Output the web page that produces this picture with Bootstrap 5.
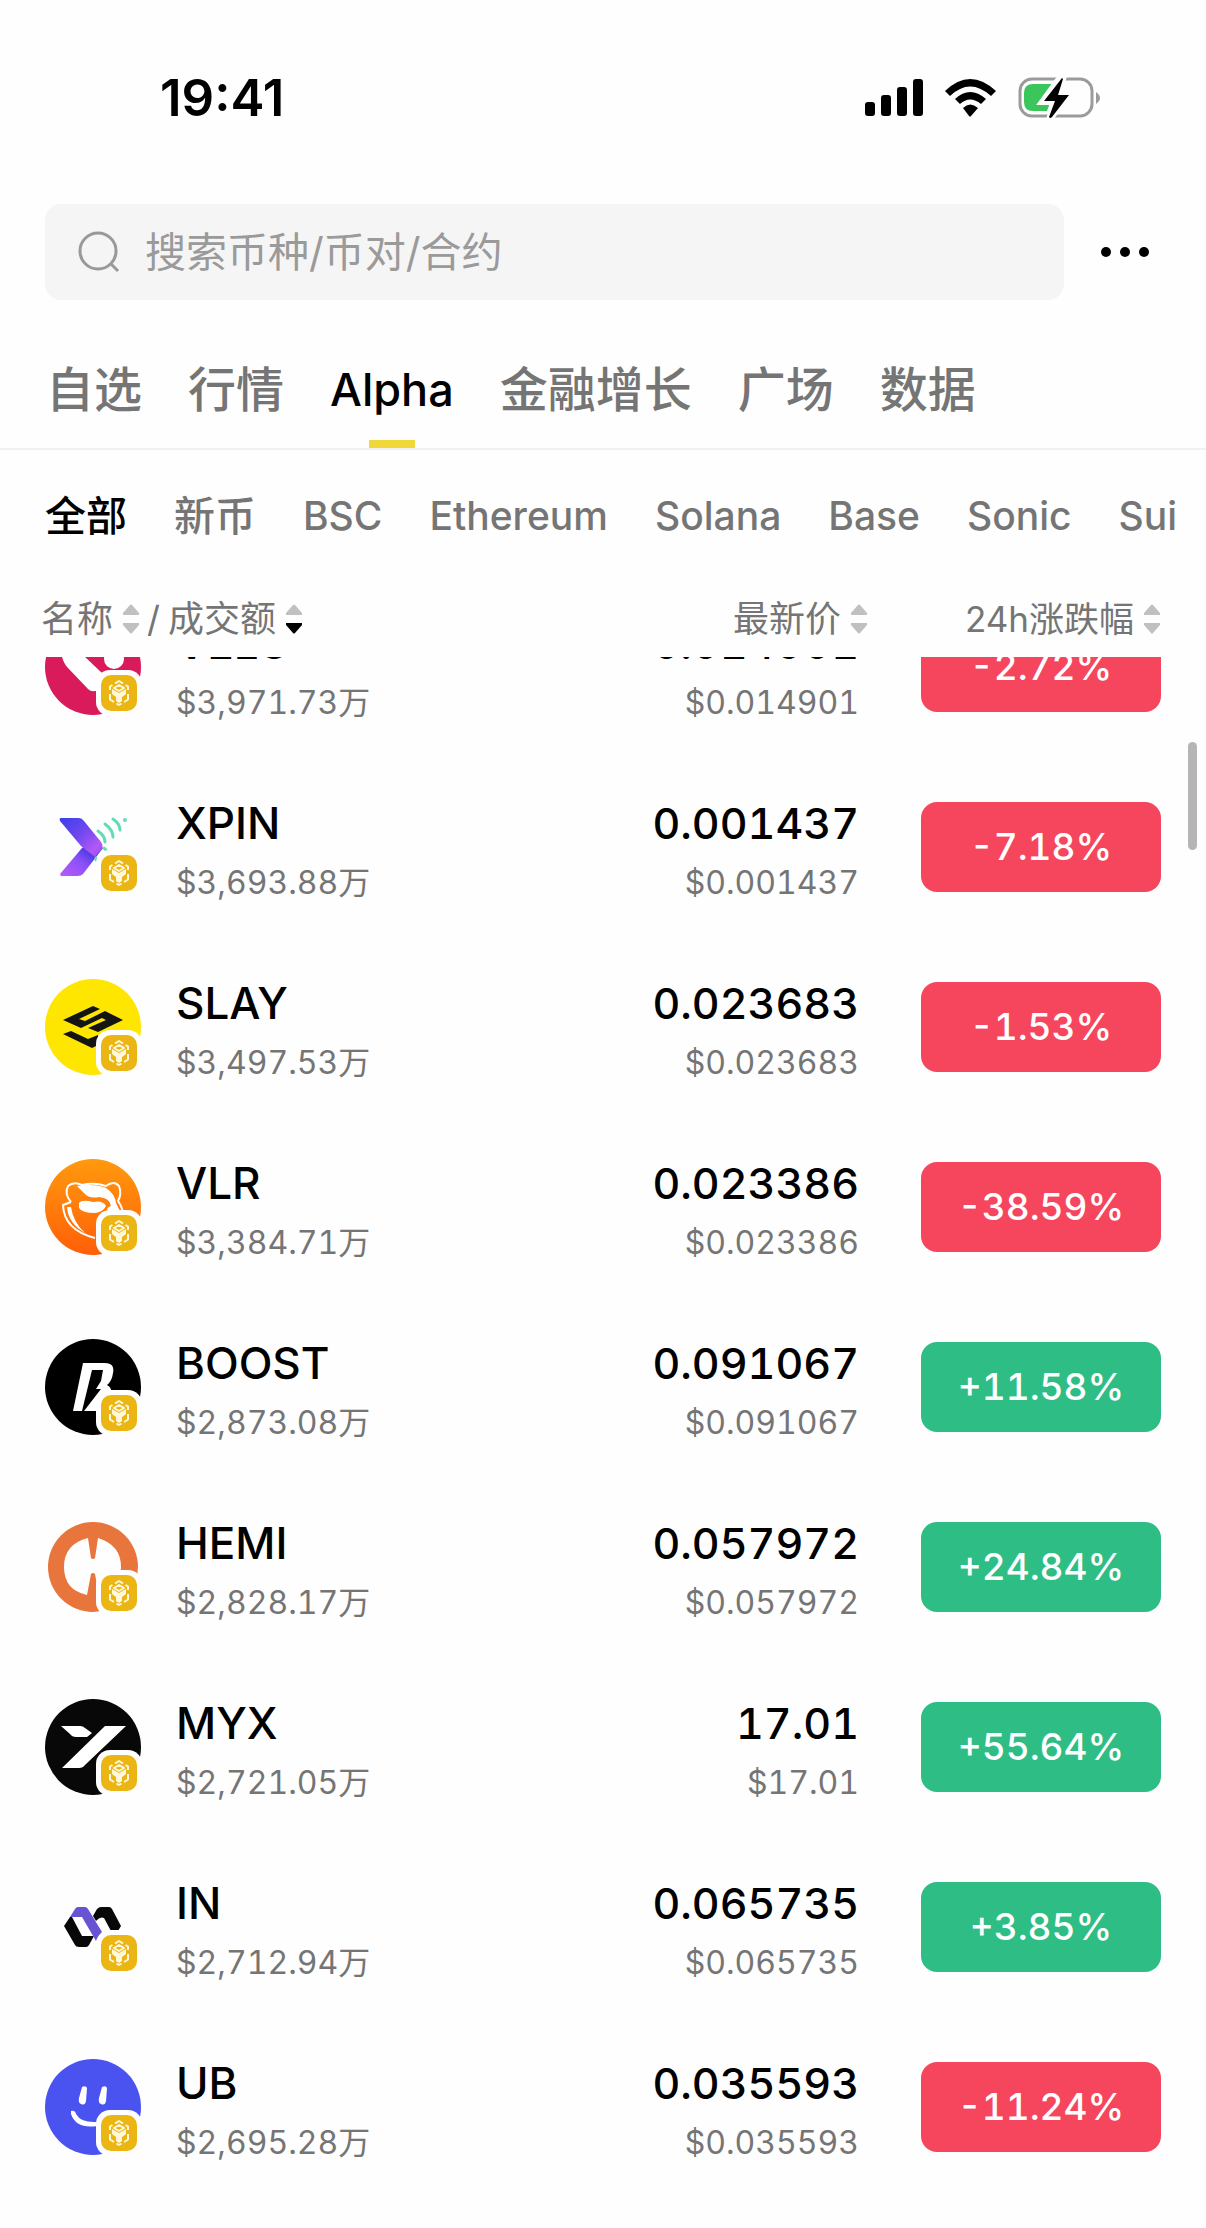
<!DOCTYPE html>
<html lang="zh-CN">
<head>
<meta charset="utf-8">
<meta name="viewport" content="width=device-width, initial-scale=1">
<title>Alpha 行情</title>
<link href="https://cdn.jsdelivr.net/npm/bootstrap@5.3.0/dist/css/bootstrap.min.css" rel="stylesheet">
<style>
  body { font-family: Inter, "Noto Sans CJK SC", sans-serif; color: #000; background: #fefefe; font-variant-numeric: tabular-nums; }
  svg { display: block; flex: none; }
  .screen { min-height: 100vh; overflow: hidden; }
  .status { height: 204px; padding: 68px 104px 0 160px; }
  .clock { font-size: 51px; line-height: 60px; font-weight: 600; font-variant-numeric: normal; }
  .search-area { padding: 0 40px 0 45px; gap: 20px; }
  .search-box { height: 96px; border-radius: 16px; background: #f5f5f5; padding: 0 33px; gap: 25px; }
  .search-box input { font-size: 41px; line-height: 60px; outline: 0; }
  .search-box input::placeholder { color: #9a9a9a; opacity: 1; }
  .tabs { height: 150px; padding: 0 46px; gap: 46px; border-bottom: 2px solid #f0f0f0; }
  .tabs a { font-size: 48px; font-weight: 500; line-height: 60px; padding: 60px 0 28px; color: #757575; position: relative; text-decoration: none; white-space: nowrap; }
  .tabs a.active { color: #000; font-size: 45px; }
  .tabs a.active::after { content: ""; position: absolute; left: 50%; bottom: 0; width: 46px; height: 8px; margin-left: -23px; background: #f0d73a; }
  .chains { padding: 36px 0 34px 45px; gap: 47px; }
  .chains a { font-size: 39px; line-height: 60px; font-weight: 500; color: #757575; text-decoration: none; white-space: nowrap; }
  .chains .zh { font-size: 41px; }
  .chains a.active { color: #000; }
  .sorts { height: 77px; padding: 0 46px 0 41px; color: #757575; font-size: 36px; line-height: 50px; }
  .sorts button { gap: 10px; white-space: nowrap; }
  .sorts .sort-change { width: 293px; font-size: 35px; }
  .viewport { overflow: hidden; }
  .coins { table-layout: fixed; margin-top: -80px; width: 100%; }
  .coins td { height: 180px; padding: 0; vertical-align: middle; }
  .coins .c-name { padding-left: 45px; }
  .coins .c-price { width: 300px; text-align: right; }
  .coins .c-change { width: 347px; padding-right: 45px; }
  .coin { gap: 34px; }
  .coin-text { padding-top: 12px; }
  .main-line { font-size: 44px; line-height: 60px; font-weight: 500; }
  .c-price .main-line { font-size: 43px; }
  .sub-line { font-size: 32px; line-height: 60px; color: #757575; }
  .rate { width: 240px; height: 90px; border-radius: 16px; font-size: 37px; font-weight: 500; color: #fff; }
  .down { background: #f6465d; }
  .up { background: #2ebd85; }
  .thumb { position: absolute; right: 9px; top: 742px; width: 9px; height: 108px; border-radius: 5px; background: #b5b5b5; }
</style>
</head>
<body>

<svg width="0" height="0" class="position-absolute" aria-hidden="true">
  <defs>
    <linearGradient id="gOrange" x1="0" y1="0" x2="0" y2="1"><stop offset="0" stop-color="#ff9a0e"/><stop offset="1" stop-color="#ff5f08"/></linearGradient>
    <linearGradient id="gViolet" x1="0" y1="0" x2="1" y2="1"><stop offset="0" stop-color="#3a3fe8"/><stop offset=".45" stop-color="#7048ee"/><stop offset=".8" stop-color="#b258f6"/><stop offset="1" stop-color="#8a50f0"/></linearGradient>
    <linearGradient id="gViolet2" x1="0" y1="1" x2="1" y2="0"><stop offset="0" stop-color="#b85cf8"/><stop offset=".45" stop-color="#8a50f8"/><stop offset=".75" stop-color="#3f35dc"/></linearGradient>
    <symbol id="bnb" viewBox="0 0 96 96">
      <rect x="51" y="51" width="46" height="46" rx="14" fill="#fefefe"/>
      <rect x="56" y="56" width="36" height="36" rx="10" fill="#ebb513"/>
      <g fill="none" stroke="#fff8dc" stroke-width="2" stroke-linejoin="round">
        <path d="M70 64.500l4-2.500 4 2.500M67.500 66L65 67.500V71M80.500 66l2.500 1.500V71M65 75v5.500l4 2.500M83 75v5.500l-4 2.500M71.500 84.500L74 86l2.500-1.500"/>
        <path d="M69 69l5-3 5 3-5 3z"/>
      </g>
      <path d="M67 70l7 4 7-4v5l-4 3v4l-3 2-3-2v-4l-4-3z" fill="#fff8dc"/>
    </symbol>
    <symbol id="velo" viewBox="0 0 96 96">
      <circle cx="48" cy="48" r="48" fill="#d91b5c"/>
      <path d="M8 26Q22 18 38 36L58 55Q55 60 53 71Q47 74 43 70L23 49Q19 45 17 38z" fill="#fff"/>
      <circle cx="69" cy="40" r="10" fill="#fff"/>
    </symbol>
    <symbol id="xpin" viewBox="0 0 96 96">
      <path d="M15 75L37 49 50 42 58 49 38 75Q36 77 33 77H16z" fill="url(#gViolet2)"/>
      <path d="M16 19H34Q37 19 39 22L56 43Q59 47 56 51L50 58 36 47 15 22Q14 19 16 19z" fill="url(#gViolet)"/>
      <g fill="none" stroke="#62dcb8" stroke-width="3" stroke-linecap="round"><path d="M53 32Q60 37 60 43M60 25Q68 31 68 38M68 20Q75 25 75 31M59 49l2 2M51 59v2"/></g>
      <circle cx="80" cy="21" r="2" fill="#62dcb8"/>
    </symbol>
    <symbol id="slay" viewBox="0 0 96 96">
      <circle cx="48" cy="48" r="48" fill="#fee600"/>
      <path d="M18 41L48 27 55 30 34 40 40 42 60 32 78 41 53 53 43 49 61 41 57 39 36 49zM18 55L26 52 43 60 53 56V66L47 69z" fill="#141414"/>
    </symbol>
    <symbol id="vlr" viewBox="0 0 96 96">
      <circle cx="48" cy="48" r="48" fill="url(#gOrange)"/>
      <path d="M26 43Q19 35 23 27Q29 22 37 26Q49 23 61 27Q69 21 74 27Q77 35 73 42Q79 50 78 60M26 43L18 46Q19 71 50 79" fill="none" stroke="#fff" stroke-width="2"/>
      <path d="M32 27Q50 24 61 29Q70 35 71 44L78 58 69 55Q57 50 66 47Q65 39 54 38Q44 40 39 34z" fill="#fff"/>
      <path d="M34 44Q37 40 48 43Q58 41 61 47Q58 53 50 54Q37 54 34 49z" fill="#fff"/>
      <path d="M22 48Q23 64 40 74Q28 63 26 48z" fill="#fff"/>
    </symbol>
    <symbol id="boost" viewBox="0 0 96 96">
      <circle cx="48" cy="48" r="48" fill="#000"/>
      <path d="M38 24H60Q70 24 68 34Q67 42 62 46Q68 49 66 57Q64 72 52 72H39L56 50H51L56 42 58 31H47L37 72H28z" fill="#fff"/>
    </symbol>
    <symbol id="hemi" viewBox="0 0 96 96">
      <circle cx="48" cy="48" r="45" fill="#e8753c"/>
      <path d="M43 19Q19 25 19 48T42 76L46 55Q48 53 50 55L54 76Q76 70 76 48T53 19L50 39Q48 41 46 39z" fill="#fefefe"/>
    </symbol>
    <symbol id="myx" viewBox="0 0 96 96">
      <circle cx="48" cy="48" r="48" fill="#080808"/>
      <path d="M16 27H35Q38 27 40 29L47 34 42 38H31Q27 38 25 35zM60 27H81L40 66Q38 69 34 69H17z" fill="#fff"/>
    </symbol>
    <symbol id="inn" viewBox="0 0 96 96">
      <path d="M25 38L19 47 30 66Q31 68 34 68H41Q43 68 44 66L49 57H37L27 38z" fill="#080808"/>
      <path d="M25 38L30 30Q31 28 33 28H40Q42 28 43 30L57 53 51 62 37 38z" fill="#6953d2"/>
      <path d="M48 37L52 30Q54 28 56 28H64Q66 28 67 30L76 47 73 52H66L59 39Q55 37 51 42z" fill="#080808"/>
    </symbol>
    <symbol id="ub" viewBox="0 0 96 96">
      <circle cx="48" cy="48" r="48" fill="#4a53ef"/>
      <path d="M37 28Q41 26 42 29L41 42Q40 47 36 45Q33 44 34 39zM57 28Q61 26 62 29L61 42Q60 47 56 45Q53 44 54 39zM26 52Q30 51 31 55Q36 64 52 63V67Q31 70 26 55z" fill="#fff"/>
    </symbol>
    <symbol id="arrows" viewBox="0 0 16 32">
      <path d="M7 2Q8 1 9 2L16 10V12H0V10z" fill="#c0c0c0"/>
      <path d="M0 20H16V22L9 30Q8 31 7 30L0 22z" fill="currentColor"/>
    </symbol>
  </defs>
</svg>

<div class="screen position-relative">
  <header class="status d-flex align-items-start justify-content-between">
    <div class="clock">19:41</div>
    <div class="d-flex">
      <svg width="237" height="60" viewBox="0 0 237 60" role="img" aria-label="信号、Wi-Fi、充电中">
        <g><rect x="0" y="34" width="10" height="14" rx="3"/><rect x="16" y="27" width="10" height="21" rx="3"/><rect x="32" y="19" width="10" height="29" rx="3"/><rect x="48" y="11" width="10" height="37" rx="3"/></g>
        <path d="M80 23Q105 -1 131 23L126 28Q105 9 85 28zM90 31Q105 17 121 31L116 36Q105 27 95 36zM98 40Q105 33 113 40L106 48Q105 49 104 48z"/>
        <rect x="155" y="11" width="72" height="37" rx="12" fill="none" stroke="#9b9b9b" stroke-width="3"/>
        <path d="M168 16H192L182 43H168Q159 43 159 34V25Q159 16 168 16z" fill="#3bc65c"/>
        <path d="M231 24Q239 30 231 36z" fill="#9b9b9b"/>
        <path d="M196 8L177 34H189L184 52 205 26H193L199 8z" stroke="#fefefe" stroke-width="6"/>
        <path d="M197 10L179 33H190L184 49Q185 51 187 49L204 27H193L198 11z"/>
      </svg>
    </div>
  </header>

  <form class="search-area d-flex align-items-center" role="search">
    <label class="search-box d-flex align-items-center flex-grow-1">
      <svg width="42" height="42" viewBox="0 0 42 42" fill="none" stroke="#999" stroke-width="3"><circle cx="20" cy="20" r="18"/><path d="M33 33l7 7"/></svg>
      <input type="search" class="border-0 bg-transparent flex-grow-1 p-0" placeholder="搜索币种/币对/合约" aria-label="搜索币种/币对/合约">
    </label>
    <button type="button" class="btn border-0 p-3" aria-label="更多">
      <svg width="50" height="12" viewBox="0 0 50 12"><circle cx="6" cy="6" r="5"/><circle cx="25" cy="6" r="5"/><circle cx="44" cy="6" r="5"/></svg>
    </button>
  </form>

  <nav class="tabs d-flex" aria-label="市场">
    <a href="#">自选</a>
    <a href="#">行情</a>
    <a href="#" class="active" aria-current="page">Alpha</a>
    <a href="#">金融增长</a>
    <a href="#">广场</a>
    <a href="#">数据</a>
  </nav>

  <nav class="chains d-flex overflow-hidden" aria-label="公链">
    <a href="#" class="zh active" aria-current="true">全部</a>
    <a href="#" class="zh">新币</a>
    <a href="#">BSC</a>
    <a href="#">Ethereum</a>
    <a href="#">Solana</a>
    <a href="#">Base</a>
    <a href="#">Sonic</a>
    <a href="#">Sui</a>
  </nav>

  <div class="sorts d-flex align-items-center">
    <div class="d-flex align-items-center flex-grow-1 gap-2">
      <button type="button" class="d-flex align-items-center border-0 bg-transparent p-0 text-reset">名称<svg width="16" height="32" color="#c0c0c0"><use href="#arrows"/></svg></button>
      <span>/</span>
      <button type="button" class="d-flex align-items-center border-0 bg-transparent p-0 text-reset">成交额<svg width="16" height="32" color="#000"><use href="#arrows"/></svg></button>
    </div>
    <button type="button" class="d-flex align-items-center border-0 bg-transparent p-0 text-reset">最新价<svg width="16" height="32" color="#c0c0c0"><use href="#arrows"/></svg></button>
    <button type="button" class="sort-change d-flex align-items-center justify-content-end border-0 bg-transparent p-0 text-reset">24h涨跌幅<svg width="16" height="32" color="#c0c0c0"><use href="#arrows"/></svg></button>
  </div>

  <main class="viewport">
    <table class="coins" aria-label="Alpha 代币">
      <colgroup><col><col style="width:300px"><col style="width:347px"></colgroup>
      <tbody>
        <tr>
          <td class="c-name"><div class="coin d-flex align-items-center"><svg width="97" height="97" viewBox="0 0 97 97"><use href="#velo" width="96" height="96"/><use href="#bnb" width="96" height="96"/></svg><div class="coin-text"><div class="main-line">VELO</div><div class="sub-line">$3,971.73万</div></div></div></td>
          <td class="c-price"><div class="coin-text"><div class="main-line">0.014901</div><div class="sub-line">$0.014901</div></div></td>
          <td class="c-change"><div class="rate down d-flex align-items-center justify-content-center ms-auto">-2.72%</div></td>
        </tr>
        <tr>
          <td class="c-name"><div class="coin d-flex align-items-center"><svg width="97" height="97" viewBox="0 0 97 97"><use href="#xpin" width="96" height="96"/><use href="#bnb" width="96" height="96"/></svg><div class="coin-text"><div class="main-line">XPIN</div><div class="sub-line">$3,693.88万</div></div></div></td>
          <td class="c-price"><div class="coin-text"><div class="main-line">0.001437</div><div class="sub-line">$0.001437</div></div></td>
          <td class="c-change"><div class="rate down d-flex align-items-center justify-content-center ms-auto">-7.18%</div></td>
        </tr>
        <tr>
          <td class="c-name"><div class="coin d-flex align-items-center"><svg width="97" height="97" viewBox="0 0 97 97"><use href="#slay" width="96" height="96"/><use href="#bnb" width="96" height="96"/></svg><div class="coin-text"><div class="main-line">SLAY</div><div class="sub-line">$3,497.53万</div></div></div></td>
          <td class="c-price"><div class="coin-text"><div class="main-line">0.023683</div><div class="sub-line">$0.023683</div></div></td>
          <td class="c-change"><div class="rate down d-flex align-items-center justify-content-center ms-auto">-1.53%</div></td>
        </tr>
        <tr>
          <td class="c-name"><div class="coin d-flex align-items-center"><svg width="97" height="97" viewBox="0 0 97 97"><use href="#vlr" width="96" height="96"/><use href="#bnb" width="96" height="96"/></svg><div class="coin-text"><div class="main-line">VLR</div><div class="sub-line">$3,384.71万</div></div></div></td>
          <td class="c-price"><div class="coin-text"><div class="main-line">0.023386</div><div class="sub-line">$0.023386</div></div></td>
          <td class="c-change"><div class="rate down d-flex align-items-center justify-content-center ms-auto">-38.59%</div></td>
        </tr>
        <tr>
          <td class="c-name"><div class="coin d-flex align-items-center"><svg width="97" height="97" viewBox="0 0 97 97"><use href="#boost" width="96" height="96"/><use href="#bnb" width="96" height="96"/></svg><div class="coin-text"><div class="main-line">BOOST</div><div class="sub-line">$2,873.08万</div></div></div></td>
          <td class="c-price"><div class="coin-text"><div class="main-line">0.091067</div><div class="sub-line">$0.091067</div></div></td>
          <td class="c-change"><div class="rate up d-flex align-items-center justify-content-center ms-auto">+11.58%</div></td>
        </tr>
        <tr>
          <td class="c-name"><div class="coin d-flex align-items-center"><svg width="97" height="97" viewBox="0 0 97 97"><use href="#hemi" width="96" height="96"/><use href="#bnb" width="96" height="96"/></svg><div class="coin-text"><div class="main-line">HEMI</div><div class="sub-line">$2,828.17万</div></div></div></td>
          <td class="c-price"><div class="coin-text"><div class="main-line">0.057972</div><div class="sub-line">$0.057972</div></div></td>
          <td class="c-change"><div class="rate up d-flex align-items-center justify-content-center ms-auto">+24.84%</div></td>
        </tr>
        <tr>
          <td class="c-name"><div class="coin d-flex align-items-center"><svg width="97" height="97" viewBox="0 0 97 97"><use href="#myx" width="96" height="96"/><use href="#bnb" width="96" height="96"/></svg><div class="coin-text"><div class="main-line">MYX</div><div class="sub-line">$2,721.05万</div></div></div></td>
          <td class="c-price"><div class="coin-text"><div class="main-line">17.01</div><div class="sub-line">$17.01</div></div></td>
          <td class="c-change"><div class="rate up d-flex align-items-center justify-content-center ms-auto">+55.64%</div></td>
        </tr>
        <tr>
          <td class="c-name"><div class="coin d-flex align-items-center"><svg width="97" height="97" viewBox="0 0 97 97"><use href="#inn" width="96" height="96"/><use href="#bnb" width="96" height="96"/></svg><div class="coin-text"><div class="main-line">IN</div><div class="sub-line">$2,712.94万</div></div></div></td>
          <td class="c-price"><div class="coin-text"><div class="main-line">0.065735</div><div class="sub-line">$0.065735</div></div></td>
          <td class="c-change"><div class="rate up d-flex align-items-center justify-content-center ms-auto">+3.85%</div></td>
        </tr>
        <tr>
          <td class="c-name"><div class="coin d-flex align-items-center"><svg width="97" height="97" viewBox="0 0 97 97"><use href="#ub" width="96" height="96"/><use href="#bnb" width="96" height="96"/></svg><div class="coin-text"><div class="main-line">UB</div><div class="sub-line">$2,695.28万</div></div></div></td>
          <td class="c-price"><div class="coin-text"><div class="main-line">0.035593</div><div class="sub-line">$0.035593</div></div></td>
          <td class="c-change"><div class="rate down d-flex align-items-center justify-content-center ms-auto">-11.24%</div></td>
        </tr>
      </tbody>
    </table>
  </main>
  <div class="thumb"></div>
</div>
<script src="https://cdn.jsdelivr.net/npm/bootstrap@5.3.0/dist/js/bootstrap.bundle.min.js"></script>
</body>
</html>
